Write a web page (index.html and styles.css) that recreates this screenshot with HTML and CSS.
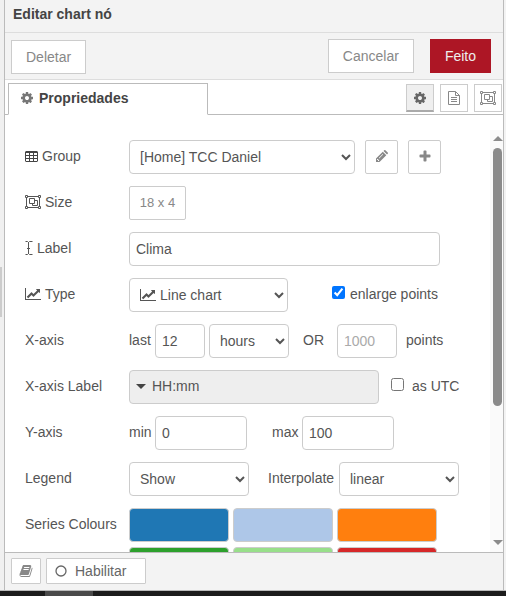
FILE: index.html
```html
<!DOCTYPE html>
<html lang="pt">
<head>
<meta charset="utf-8">
<title>Editar chart nó</title>
<link rel="stylesheet" href="styles.css">
</head>
<body>
<svg class="defs" aria-hidden="true">
  <symbol id="cog" viewBox="0 0 1792 1792"><path d="M1152 896q0-106-75-181t-181-75-181 75-75 181 75 181 181 75 181-75 75-181zm512-109v222q0 12-8 23t-20 13l-185 28q-19 54-39 91 35 50 107 138 10 12 10 25t-9 23q-27 37-99 108t-94 71q-12 0-26-9l-138-108q-44 23-91 38-16 136-29 186-7 28-36 28h-222q-14 0-24.500-8.500t-11.500-21.500l-28-184q-49-16-90-37l-141 107q-10 9-25 9-14 0-25-11-126-114-165-168-7-10-7-23 0-12 8-23 15-21 51-66.500t54-70.500q-27-50-41-99l-183-27q-13-2-21-12.500t-8-23.500v-222q0-12 8-23t19-13l186-28q14-46 39-92-40-57-107-138-10-12-10-24 0-10 9-23 26-36 98.500-107.500t94.500-71.500q13 0 26 10l138 107q44-23 91-38 16-136 29-186 7-28 36-28h222q14 0 24.500 8.500t11.500 21.500l28 184q49 16 90 37l142-107q9-9 24-9 13 0 25 10 129 119 165 170 7 8 7 22 0 12-8 23-15 21-51 66.500t-54 70.500q26 50 41 98l183 28q13 2 21 12.500t8 23.500z"/></symbol>
  <symbol id="chart" viewBox="0 0 2048 1792"><path d="M2048 1536v128h-2048v-1536h128v1408h1920zm-128-1248v435q0 21-19.500 29.500t-35.500-7.500l-121-121-633 633q-10 10-23 10t-23-10l-233-233-416 416-192-192 585-585q10-10 23-10t23 10l233 233 464-464-121-121q-16-16-7.500-35.500t29.500-19.500h435q14 0 23 9t9 23z"/></symbol>
  <symbol id="group" viewBox="0 0 16 14"><path fill="none" stroke="currentColor" d="M3 1.500h10M3 12.500h10M1.500 3v8M14.500 3v8M.5.5h2v2h-2zM13.500.5h2v2h-2zM.5 11.500h2v2h-2zM13.500 11.500h2v2h-2zM4.500 3.500h5v5h-5zM10 5.500h2.500v5h-5V9"/></symbol>
</svg>

<div class="workspace">
  <div class="separator"><span class="grip"></span></div>
  <main class="tray">
    <header class="title">Editar chart nó</header>
    <div class="toolbar">
      <button class="btn" type="button">Deletar</button>
      <div class="actions">
        <button class="btn" type="button">Cancelar</button>
        <button class="btn primary" type="button">Feito</button>
      </div>
    </div>
    <div class="tabs">
      <a class="tab" href="#form"><svg class="icon i14"><use href="#cog"/></svg>Propriedades</a>
      <div class="tab-buttons">
        <button class="tab-btn selected" type="button" aria-label="Propriedades"><svg class="icon i14"><use href="#cog"/></svg></button>
        <button class="tab-btn" type="button" aria-label="Descrição"><svg class="icon doc" viewBox="0 0 12 14"><path fill="none" stroke="currentColor" d="M.5.5h7l4 4v9H.5zM7.500.5v4h4M3 6.500h6M3 8.500h6M3 10.500h6"/></svg></button>
        <button class="tab-btn" type="button" aria-label="Aparência"><svg class="icon wide"><use href="#group"/></svg></button>
      </div>
    </div>

    <div class="body">
      <form class="form" id="form">
        <div class="row">
          <label class="name" for="grp"><svg class="icon table" viewBox="0 0 13 11"><path fill-rule="evenodd" d="M1 0h11l1 1v9l-1 1H1l-1-1V1zM1 2v2h3V2zM5 2v2h3V2zM9 2v2h3V2zM1 5v2h3V5zM5 5v2h3V5zM9 5v2h3V5zM1 8v2h3V8zM5 8v2h3V8zM9 8v2h3V8z"/></svg>Group</label>
          <div class="field gap10">
            <select class="ctl w-group" id="grp"><option>[Home] TCC Daniel</option></select>
            <button class="btn square" type="button" aria-label="Editar"><svg class="icon i12" viewBox="0 0 12 12"><path fill-rule="evenodd" d="M0 12v-3.500L6.800 1.700l3.500 3.500L3.500 12zM7.500 1L8.200.3q.6-.6 1.200 0l2.300 2.300q.6.600 0 1.200l-.7.700zM1 9.200v.8h1v1h.8l.5-.5-1.800-1.800zM2.800 8l.4.400 3.900-3.900-.4-.4z"/></svg></button>
            <button class="btn square" type="button" aria-label="Adicionar"><svg class="icon i12" viewBox="0 0 12 12"><path d="M5.300.500h1.400q.8 0 .8.800v3.200h3.200q.8 0 .8.800v1.400q0 .8-.8.800H7.500v3.200q0 .8-.8.800H5.300q-.8 0-.8-.8V7.500H1.300q-.8 0-.8-.8V5.300q0-.8.800-.8h3.200V1.300q0-.8.800-.8z"/></svg></button>
          </div>
        </div>
        <div class="row">
          <label class="name" for="size"><svg class="icon wide"><use href="#group"/></svg>Size</label>
          <button class="btn size" id="size" type="button">18 x 4</button>
        </div>
        <div class="row">
          <label class="name" for="lbl"><svg class="icon cursor" viewBox="0 0 8 14"><path fill="none" stroke="currentColor" d="M.5.5h2l1 1 1-1h3M3.500 1v12M.5 13.500h2l1-1 1 1h3M2 7.500h3"/></svg>Label</label>
          <input class="ctl w-label" id="lbl" type="text" value="Clima">
        </div>
        <div class="row">
          <label class="name" for="type"><svg class="icon wide"><use href="#chart"/></svg>Type</label>
          <div class="icon-select">
            <svg class="icon wide"><use href="#chart"/></svg>
            <select class="ctl w-type" id="type"><option>Line chart</option></select>
          </div>
          <label class="check far"><input type="checkbox" checked>enlarge points</label>
        </div>
        <div class="row">
          <label class="name" for="last">X-axis</label>
          <div class="field">
            <label class="lead" for="last">last</label>
            <input class="ctl w-50" id="last" type="text" value="12">
            <select class="ctl w-80" aria-label="Unidade"><option>hours</option></select>
            <label class="or" for="points">OR</label>
            <input class="ctl w-60" id="points" type="text" placeholder="1000">
            <label class="after" for="points">points</label>
          </div>
        </div>
        <div class="row">
          <label class="name" for="fmt">X-axis Label</label>
          <button class="ctl typed" id="fmt" type="button"><span class="caret"></span>HH:mm</button>
          <label class="check utc"><input type="checkbox">as UTC</label>
        </div>
        <div class="row">
          <label class="name" for="min">Y-axis</label>
          <div class="field">
            <label class="lead" for="min">min</label>
            <input class="ctl w-92" id="min" type="text" value="0">
            <label class="max" for="max">max</label>
            <input class="ctl w-92" id="max" type="text" value="100">
          </div>
        </div>
        <div class="row">
          <label class="name" for="legend">Legend</label>
          <div class="field">
            <select class="ctl w-120" id="legend"><option>Show</option></select>
            <label class="interp" for="interp">Interpolate</label>
            <select class="ctl w-120" id="interp"><option>linear</option></select>
          </div>
        </div>
        <div class="row colours">
          <span class="name">Series Colours</span>
          <div class="swatches">
            <button class="sw blue" type="button" aria-label="1"></button>
            <button class="sw light" type="button" aria-label="2"></button>
            <button class="sw orange" type="button" aria-label="3"></button>
            <button class="sw green" type="button" aria-label="4"></button>
            <button class="sw lime" type="button" aria-label="5"></button>
            <button class="sw red" type="button" aria-label="6"></button>
          </div>
        </div>
      </form>
      <div class="scrollbar" aria-hidden="true"><span class="arrow up"></span><span class="track"><span class="thumb"></span></span><span class="arrow down"></span></div>
    </div>

    <footer class="footer">
      <button class="small book" type="button" aria-label="Ajuda"><svg class="icon i14" viewBox="0 0 1792 1792"><path d="M1703 478q40 57 18 129l-275 906q-19 64-76.500 107.500t-122.500 43.500h-923q-77 0-148.500-53.500t-99.500-131.500q-24-67-2-127 0-4 3-27t4-37q1-8-3-21.500t-3-19.500q2-11 8-21t16.500-23.500 16.500-23.500q23-38 45-91.500t30-91.500q3-10 .5-30t-.5-28q3-11 17-28t17-23q21-36 42-92t25-90q1-9-2.500-32t.5-28q4-13 22-30.500t22-22.500q19-26 42.500-84.500t27.500-96.500q1-8-3-25.500t-2-26.500q2-8 9-18t18-23 17-21q8-12 16.500-30.500t15-35 16-36 19.500-32 26.500-23.500 36-11.500 47.500 5.500l-1 3q38-9 51-9h761q74 0 114 56t18 130l-274 906q-36 119-71.500 153.500t-128.500 34.500h-869q-27 0-38 15-11 16-1 43 24 70 144 70h923q29 0 56-15.500t35-41.500l300-987q7-22 5-57 38 15 59 43zm-1064 2q-4 13 2 22.500t20 9.500h608q13 0 25.500-9.500t16.500-22.500l21-64q4-13-2-22.500t-20-9.500h-608q-13 0-25.500 9.500t-16.500 22.500zm-83 256q-4 13 2 22.500t20 9.500h608q13 0 25.500-9.500t16.500-22.500l21-64q4-13-2-22.500t-20-9.500h-608q-13 0-25.500 9.500t-16.500 22.500z"/></svg></button>
      <button class="small enable" type="button"><svg class="icon ring" viewBox="0 0 12 12"><circle cx="6" cy="6" r="5" fill="none" stroke="currentColor" stroke-width="1.300"/></svg>Habilitar</button>
    </footer>
  </main>
</div>
<div class="taskbar"><span class="task"></span></div>
</body>
</html>
```
FILE: styles.css
```css
* { box-sizing: border-box; }

body {
  margin: 0;
  height: 100vh;
  display: flex;
  flex-direction: column;
  overflow: hidden;
  background: #f3f3f3;
  color: #555;
  font: 14px/20px "Liberation Sans", Arial, sans-serif;
}

button, input, select { font: inherit; color: inherit; margin: 0; }

.defs { position: absolute; width: 0; height: 0; }
.icon { display: block; flex: none; fill: currentColor; }
.i14 { width: 14px; height: 14px; }
.i12 { width: 12px; height: 12px; }
.wide { width: 16px; height: 14px; }
.table { width: 13px; height: 11px; color: #444; }
.doc { width: 12px; height: 14px; }
.cursor { width: 8px; height: 14px; }
.ring { width: 12px; height: 12px; }

.workspace {
  flex: 1;
  min-height: 0;
  display: flex;
  padding-right: 2px;
  border-bottom: 1px solid #bbb;
}
.separator { width: 4px; flex: none; display: flex; align-items: center; padding-bottom: 6px; background: #f0f0f0; }
.grip { width: 2px; height: 50px; background: #ccc; }

.tray {
  flex: 1;
  min-width: 0;
  display: flex;
  flex-direction: column;
  border: solid #bbb;
  border-width: 0 1px;
  background: #fff;
}

.title {
  padding: 4px 8px 8px;
  border-bottom: 1px solid #ddd;
  background: #f3f3f3;
  color: #444;
  font-weight: bold;
}

.toolbar {
  display: flex;
  align-items: flex-end;
  justify-content: space-between;
  padding: 6px 12px 5px 6px;
  border-bottom: 1px solid #ddd;
  background: #f3f3f3;
}
.actions { display: flex; gap: 16px; padding-bottom: 1px; }

.btn {
  height: 34px;
  padding: 0 14px;
  border: 1px solid #ccc;
  background: #fff;
  color: #888;
}
.btn.primary { border-color: #ad1625; background: #ad1625; color: #eee; }
.btn.square { width: 33px; padding: 0 0 2px; display: flex; align-items: center; justify-content: center; border-radius: 2px; }
.btn.size { width: 57px; padding: 0; border-radius: 2px; font-size: 13px; }

.tabs {
  display: flex;
  align-items: flex-end;
  height: 35px;
  padding-left: 3px;
  border-bottom: 1px solid #bbb;
}
.tab {
  display: flex;
  align-items: center;
  gap: 5px;
  width: 200px;
  height: 32px;
  margin-bottom: -1px;
  padding: 0 11px 2px;
  border: 1px solid #bbb;
  border-bottom-color: #fff;
  background: #fff;
  color: #444;
  font-weight: bold;
  text-decoration: none;
}
.tab .icon { color: #777; }
.tab-buttons { display: flex; gap: 6px; margin-left: auto; padding: 0 1px 2px 0; }
.tab-btn {
  display: flex;
  align-items: center;
  justify-content: center;
  width: 28px;
  height: 28px;
  padding: 0;
  border: 1px solid #ccc;
  background: #fff;
  color: #888;
}
.tab-btn.selected { border-bottom: 2px solid #aaa; background: #efefef; color: #666; }

.body { flex: 1; min-height: 0; display: flex; padding-top: 15px; }
.form {
  flex: 1;
  min-width: 0;
  display: flex;
  flex-direction: column;
  gap: 12px;
  padding: 10px 0 0 20px;
  overflow: auto;
  scrollbar-width: none;
}
.row { display: flex; align-items: center; flex: none; min-height: 34px; }
.row label, .row .name { padding-bottom: 2px; }
.colours { align-items: flex-start; }
.colours .name { line-height: 32px; }
.name { display: flex; align-items: center; gap: 4px; width: 104px; flex: none; }
.field { display: flex; align-items: center; }
.gap10 { gap: 10px; }

.ctl {
  height: 34px;
  flex: none;
  padding: 0 6px;
  border: 1px solid #ccc;
  border-radius: 4px;
  background: #fff;
}
.ctl::placeholder { color: #aaa; opacity: 1; }
.w-group { width: 226px; }
.w-label { width: 311px; }
.w-type { width: 159px; }
.w-50 { width: 50px; }
.w-60 { width: 60px; }
.w-80 { width: 80px; }
.w-92 { width: 92px; }
.w-120 { width: 120px; }
.w-50 { margin-right: 4px; }

.icon-select { position: relative; }
.icon-select .icon { position: absolute; left: 11px; top: 10px; pointer-events: none; }
.icon-select .ctl { padding-left: 26px; }

.lead { width: 26px; }
.or { width: 48px; padding-left: 14px; }
.after { padding-left: 9px; }
.max { width: 55px; padding-left: 25px; }
.interp { width: 90px; padding-left: 19px; }

.check { display: flex; align-items: center; gap: 5px; }
.check input { width: 13px; height: 13px; margin-bottom: 4px; }
.far { margin-left: 44px; }
.utc { margin-left: 12px; gap: 8px; }

.typed { display: flex; align-items: center; gap: 6px; width: 250px; padding-bottom: 2px; background: #eee; }
.caret { border: solid transparent; border-width: 5px 5px 0; border-top-color: #444; }

.swatches { display: grid; grid-template-columns: repeat(3, 100px); gap: 5px 4px; }
.sw { height: 34px; padding: 0; border: 1px solid #ccc; border-radius: 4px; }
.blue { background: #1f77b4; }
.light { background: #aec7e8; }
.orange { background: #ff7f0e; }
.green { background: #2ca02c; }
.lime { background: #98df8a; }
.red { background: #d62728; }

.scrollbar {
  display: flex;
  flex-direction: column;
  align-items: center;
  width: 13px;
  padding: 6px 0 7px 2px;
  background: #fafafa;
}
.arrow { border: solid transparent; }
.up { border-width: 0 5px 5px; border-bottom-color: #8b8b8b; }
.down { border-width: 5px 5px 0; border-top-color: #8b8b8b; }
.track { flex: 1; display: flex; padding: 7px 0; }
.thumb { width: 9px; height: 67%; border-radius: 5px; background: #8b8b8b; }

.footer {
  display: flex;
  gap: 5px;
  padding: 5px 6px 6px;
  border-top: 1px solid #bbb;
  background: #f3f3f3;
}
.small {
  display: flex;
  align-items: center;
  height: 26px;
  padding: 0 8px;
  border: 1px solid #ccc;
  border-radius: 1px;
  background: #fff;
  color: #666;
}
.book { width: 30px; padding: 0 7px; color: #888; }
.enable { width: 100px; gap: 8px; }

.taskbar { display: flex; flex: none; height: 5px; padding-left: 45px; background: #1c1c1c; }
.task { width: 48px; background: #4a4a4a; }
```
